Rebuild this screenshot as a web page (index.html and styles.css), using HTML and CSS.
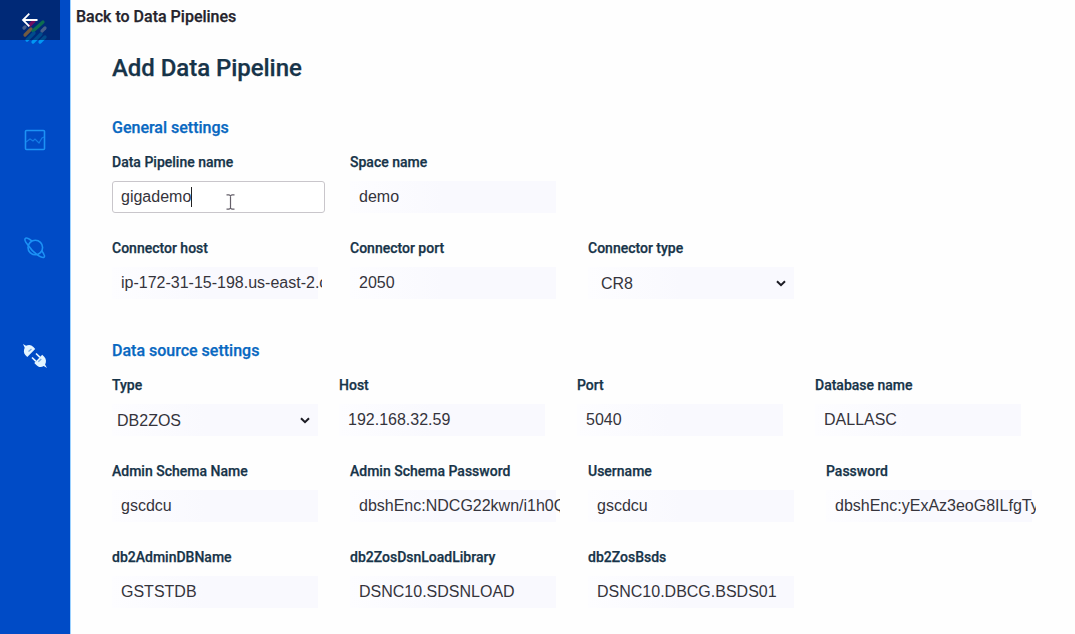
FILE: index.html
```html
<!DOCTYPE html>
<html lang="en">
<head>
<meta charset="utf-8">
<title>Add Data Pipeline</title>
<link rel="stylesheet" href="styles.css">
</head>
<body>
<div class="app">
  <nav class="sidebar">
    <svg class="logo" width="26" height="28" viewBox="0 0 26 28" fill="none" stroke-width="3.200" stroke-linecap="round">
      <path d="M8 8l4-4" stroke="#ff1090"/>
      <path d="M3 18l6-6" stroke="#ffb84c"/>
      <path d="M11 14l10-9" stroke="#20e070"/>
      <path d="M20 14l3-3" stroke="#a0c0f0"/>
      <path d="M2 11l1-1" stroke="#a0c0f0"/>
      <path d="M5 23l7-7M11 25l8-8M18 25l5-5" stroke="#0098f4"/>
    </svg>
    <svg class="nav-icon chart" width="24" height="24" viewBox="0 0 24 24" fill="none" stroke="#1c92f5" stroke-width="1.6">
      <rect x="2.500" y="2.500" width="19" height="19" rx="1"/>
      <path d="M3 14l4-3 3 2 2-2 4 4 3-5 2-1" stroke-width="1.2" stroke-opacity=".7"/>
    </svg>
    <svg class="nav-icon planet" width="24" height="24" viewBox="0 0 24 24" fill="none" stroke="#1c92f5" stroke-width="1.600">
      <circle cx="12.3" cy="11.5" r="7.3"/>
      <path d="M9 5.200C5.500 2.300 3 1.700 2.300 2.500c-.9 1 .5 4.200 3.400 7.500M18.700 14.800c2.500 3.300 3.200 5.700 2.400 6.400-1 .9-4-.4-7.400-2.800M5.700 10c2.200 3.400 5 6.300 8 8.400"/>
    </svg>
    <svg class="nav-icon plug" width="26" height="26" viewBox="0 0 26 26">
      <g fill="#e4f5ff">
        <path d="M1 1l3 1.800c3-1.600 5.300-1 7.400 1.200l1.800 2.100L5.300 14l-2-2C1.600 10 1.500 7.500 2.700 4.700z"/>
        <path d="M25 25l-3.300-1.900c-2.900 1.500-5.500.9-7.400-1.200l-2-2 7.900-8.100 2 2c2.100 2.300 2.300 5 .9 7.800z"/>
      </g>
      <path d="M10 14.500l4 3.800M14 10.500l4 3.800" stroke="#e4f5ff" stroke-width="1.7"/>
      <path d="M6.500 8.500L9.500 6M16.300 18.700l3-2.700" stroke="#76a8e6" stroke-width="1.3"/>
    </svg>
    <div class="back-overlay">
      <svg width="18" height="16" viewBox="0 0 18 16" fill="none" stroke="#fff" stroke-width="1.8"><path d="M16.500 8H2M8.300 1.600L2 8l6.300 6.400"/></svg>
    </div>
  </nav>
  <main class="page">
    <div class="back-link">Back to Data Pipelines</div>
    <h1 class="title">Add Data Pipeline</h1>
    <section class="group">
      <h2 class="heading">General settings</h2>
      <div class="row">
        <div class="field"><label class="label">Data Pipeline name</label><div class="value focused"><span class="typed">gigademo</span>
          <svg class="ibeam" width="9" height="16" viewBox="0 0 9 16" fill="none" stroke="#65606a" stroke-width="1.2"><path d="M.5.800h2.500L4.500 1.800 6 .8h2.500M4.500 1.800v12.400M.5 15.200H3l1.500-1 1.500 1h2.500"/></svg></div></div>
        <div class="field"><label class="label">Space name</label><div class="value">demo</div></div>
      </div>
      <div class="row">
        <div class="field"><label class="label">Connector host</label><div class="value"><span class="clip">ip-172-31-15-198.us-east-2.c</span></div></div>
        <div class="field"><label class="label">Connector port</label><div class="value">2050</div></div>
        <div class="field"><label class="label">Connector type</label><div class="value select inset"><span>CR8</span><svg class="chevron" width="10" height="7" viewBox="0 0 10 7"><path d="M1 1.200l4 4 4-4" fill="none" stroke="#1c1c24" stroke-width="2"/></svg></div></div>
      </div>
    </section>
    <section class="group source">
      <h2 class="heading">Data source settings</h2>
      <div class="row">
        <div class="field narrow"><label class="label">Type</label><div class="value select"><span>DB2ZOS</span><svg class="chevron" width="10" height="7" viewBox="0 0 10 7"><path d="M1 1.200l4 4 4-4" fill="none" stroke="#1c1c24" stroke-width="2"/></svg></div></div>
        <div class="field"><label class="label">Host</label><div class="value">192.168.32.59</div></div>
        <div class="field"><label class="label">Port</label><div class="value">5040</div></div>
        <div class="field"><label class="label">Database name</label><div class="value">DALLASC</div></div>
      </div>
      <div class="row">
        <div class="field"><label class="label">Admin Schema Name</label><div class="value">gscdcu</div></div>
        <div class="field"><label class="label">Admin Schema Password</label><div class="value"><span class="clip">dbshEnc:NDCG22kwn/i1h0Q</span></div></div>
        <div class="field"><label class="label">Username</label><div class="value">gscdcu</div></div>
        <div class="field"><label class="label">Password</label><div class="value"><span class="clip">dbshEnc:yExAz3eoG8ILfgTy</span></div></div>
      </div>
      <div class="row">
        <div class="field"><label class="label">db2AdminDBName</label><div class="value">GSTSTDB</div></div>
        <div class="field"><label class="label">db2ZosDsnLoadLibrary</label><div class="value">DSNC10.SDSNLOAD</div></div>
        <div class="field"><label class="label">db2ZosBsds</label><div class="value">DSNC10.DBCG.BSDS01</div></div>
      </div>
    </section>
  </main>
</div>
</body>
</html>
```
FILE: styles.css
```css
* { box-sizing: border-box; }
body {
  margin: 0;
  background: #fefefe;
  font-family: Roboto, sans-serif;
  color: #173449;
}
.app { display: flex; height: 634px; overflow: hidden; }
.sidebar {
  position: relative;
  flex: none;
  width: 71px;
  background: #004bc6;
  border-right: 1px solid #9bd1ff;
  display: flex;
  flex-direction: column;
  align-items: center;
  padding-top: 17px;
}
.chart { margin-top: 83px; }
.planet { margin-top: 84px; }
.plug { margin-top: 83px; }
.back-overlay {
  position: absolute;
  left: 0;
  top: 0;
  width: 60px;
  height: 40px;
  background: rgba(0, 15, 55, 0.55);
  display: flex;
  align-items: center;
  justify-content: center;
}
.page { flex: 1; min-width: 0; padding-left: 41px; }
.back-link,
.title,
.heading,
.label {
  font-weight: 500;
  -webkit-text-stroke: 0.25px currentColor;
}
.back-link {
  margin-left: -36px;
  padding-top: 7px;
  height: 52px;
  font-size: 16px;
  line-height: 20px;
  color: #25232c;
}
.title {
  margin: 0 0 32px;
  font-size: 24px;
  line-height: 32px;
  letter-spacing: -0.05px;
}
.heading {
  margin: 0 0 12px;
  font-size: 16px;
  line-height: 24px;
  color: #0868c1;
}
.source { padding-top: 15px; }
.row { display: flex; gap: 25px; margin-bottom: 24px; }
.field { width: 213px; flex: none; }
.narrow { width: 202px; }
.label {
  display: block;
  margin-bottom: 9px;
  font-size: 14px;
  line-height: 20px;
  white-space: nowrap;
}
.row + .row, .source { margin-top: -1px; }
.row + .row .label, .source .heading { padding-top: 1px; }
.row { margin-bottom: 25px; }
.value {
  display: flex;
  align-items: center;
  height: 32px;
  padding: 0 9px;
  background: linear-gradient(90deg, #fdfdff, #f9f9fe 45%, #f9f9fe) no-repeat 0 0 / 206px 100%;
  font: 16px/20px "Liberation Sans", Arial, sans-serif;
  color: #35343c;
  white-space: nowrap;
}
.focused {
  position: relative;
  background: #fff;
  border: 1px solid #c9c6cb;
  border-radius: 3px;
  padding: 0 8px;
}
.typed { border-right: 1px solid #222; }
.ibeam { position: absolute; left: 113px; top: 12px; }
.clip { width: 201px; flex: none; overflow: hidden; }
.select { justify-content: space-between; padding: 1px 8px 0 5px; width: 206px; }
.inset { padding-left: 13px; }
```
